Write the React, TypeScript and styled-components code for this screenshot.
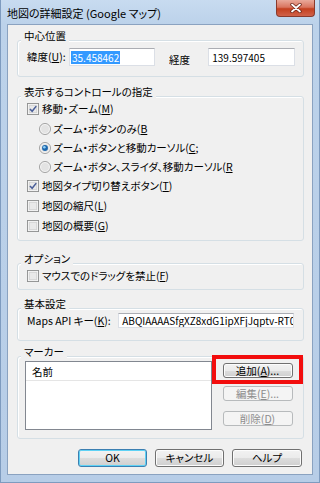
import React from 'react';
import styled, { createGlobalStyle } from 'styled-components';

const GlobalStyle = createGlobalStyle`
  html, body {
    margin: 0;
    padding: 0;
  }
  body {
    width: 320px;
    height: 483px;
    overflow: hidden;
    font-family: "Noto Sans CJK JP", "Liberation Sans", sans-serif;
    font-size: 10.5px;
    font-feature-settings: "palt";
    color: #000;
  }
`;

const Window = styled.div`
  width: 320px;
  height: 483px;
  box-sizing: border-box;
  display: flex;
  flex-direction: column;
  padding: 0 6px 7px;
  background: linear-gradient(180deg, #c8dbf0 0px, #bcd2ea 24px, #b7cde7 100%);
  border: 1px solid #7e9bbf;
  border-top: none;
`;

const TitleBar = styled.div`
  height: 24px;
  display: flex;
  align-items: flex-start;
  justify-content: space-between;
`;

const TitleText = styled.div`
  margin-top: 6px;
  line-height: 14px;
  font-size: 11px;
`;

const CloseButton = styled.div`
  width: 39px;
  height: 17px;
  margin-right: -2px;
  box-sizing: border-box;
  border: 1px solid #8a3a2c;
  border-top: none;
  border-radius: 0 0 4px 4px;
  background: linear-gradient(180deg, #e9a99a 0%, #d9755f 45%, #c4401f 55%, #d0624a 100%);
  display: flex;
  align-items: center;
  justify-content: center;
`;

const Client = styled.div`
  flex: 1;
  display: flex;
  flex-direction: column;
  background: #f0f0f0;
  border: 1px solid #8aa2c0;
  padding: 0 8px 0 9px;
`;

const Group = styled.section<{ top: number; bottom: number }>`
  margin-top: ${p => p.top}px;
  padding: 0 0 ${p => p.bottom}px 9px;
  border: 1px solid #d5dfe5;
  border-radius: 3px;
  box-shadow: inset 1px 1px 0 #fff;
`;

const GroupTitle = styled.div`
  width: fit-content;
  margin: -12px 0 0 -6px;
  padding: 0 3px;
  line-height: 14px;
  background: #f0f0f0;
`;

const Row = styled.div<{ h: number; top?: number; indent?: number }>`
  display: flex;
  align-items: center;
  height: ${p => p.h}px;
  margin-top: ${p => p.top ?? 0}px;
  margin-left: ${p => p.indent ?? 0}px;
  white-space: nowrap;
`;

const Label = styled.span<{ w?: number }>`
  flex: none;
  width: ${p => (p.w ? `${p.w}px` : 'auto')};
  line-height: 14px;
`;

const ClippedLabel = styled.div`
  flex: none;
  align-self: flex-start;
  width: 39px;
  margin-left: 14px;
  height: 29px;
  overflow: hidden;
  line-height: 24px;
  white-space: normal;
`;

const TextBox = styled.div<{ w: number }>`
  flex: none;
  width: ${p => p.w}px;
  height: 100%;
  box-sizing: border-box;
  display: flex;
  align-items: center;
  padding-left: 1px;
  background: #fff;
  border: 1px solid #dbdfe6;
  border-top-color: #abadb3;
  overflow: hidden;
  white-space: nowrap;
  font-size: 10px;
`;

const Selected = styled.span`
  background: #3399ff;
  color: #fff;
  line-height: 13px;
  padding: 0 1px;
`;

const BoxWrap = styled.span`
  display: inline-flex;
  margin-right: 3px;
`;

const RadioWrap = styled.span`
  display: inline-flex;
  margin-right: 2px;
`;

const MarkerRow = styled.div`
  display: flex;
  align-items: flex-start;
  margin-left: -2px;
`;

const ListBox = styled.div`
  width: 187px;
  height: 69px;
  margin-top: 2px;
  box-sizing: border-box;
  background: #fff;
  border: 1px solid #828790;
`;

const ListHeader = styled.div`
  height: 18px;
  display: flex;
  align-items: center;
  padding-left: 6px;
  border-bottom: 1px solid #e5e5e5;
`;

const ButtonColumn = styled.div`
  width: 91px;
  margin-top: -4px;
  display: flex;
  flex-direction: column;
  align-items: center;
`;

const Highlight = styled.div`
  width: 91px;
  box-sizing: border-box;
  border: 4px solid #f20d0d;
  padding: 4px 0 2px;
  display: flex;
  justify-content: center;
`;

const Button = styled.button<{ w: number; h: number; top?: number; variant?: 'default' | 'disabled' }>`
  width: ${p => p.w}px;
  height: ${p => p.h}px;
  margin: ${p => p.top ?? 0}px 0 0;
  padding: 0;
  box-sizing: border-box;
  font: inherit;
  font-feature-settings: "palt";
  line-height: 12px;
  border-radius: 3px;
  border: 1px solid ${p => (p.variant === 'disabled' ? '#b7babc' : p.variant === 'default' ? '#3c7fb1' : '#707070')};
  color: ${p => (p.variant === 'disabled' ? '#8d8d8d' : '#000')};
  background: ${p =>
    p.variant === 'disabled'
      ? '#f4f4f4'
      : 'linear-gradient(180deg, #f2f2f2 0%, #ebebeb 50%, #dddddd 50%, #cfcfcf 100%)'};
  box-shadow: inset 0 0 0 1px ${p => (p.variant === 'default' ? '#5fd2f5' : p.variant === 'disabled' ? '#f4f4f4' : '#fcfcfc')};
`;

const Footer = styled.div`
  display: flex;
  justify-content: flex-end;
  gap: 8px;
  margin: 10px 2px 0 0;
`;

const Check: React.FC<{ checked?: boolean }> = ({ checked }) => (
  <BoxWrap>
    <svg width="12" height="12" viewBox="0 0 13 13">
      <rect x="0.5" y="0.5" width="12" height="12" fill="#f7f7f7" stroke="#8e8f8f" />
      <rect x="2.5" y="2.5" width="8" height="8" fill="#e9e9e9" stroke="#d2d2d2" />
      {checked && <path d="M3.2 6.4 L5.6 9 L10 3.4" stroke="#4a5e98" strokeWidth="1.7" fill="none" />}
    </svg>
  </BoxWrap>
);

const Radio: React.FC<{ checked?: boolean }> = ({ checked }) => (
  <RadioWrap>
    <svg width="12" height="12" viewBox="0 0 13 13">
      <circle cx="6.5" cy="6.5" r="6" fill="#f4f4f4" stroke="#9c9c9c" />
      <circle cx="6.5" cy="6.5" r="4.2" fill="#e3e3e3" />
      {checked && (
        <>
          <circle cx="6.5" cy="6.5" r="3.2" fill="#1d67ad" />
          <circle cx="5.8" cy="5.6" r="1.4" fill="#8fd0f7" />
        </>
      )}
    </svg>
  </RadioWrap>
);

const App: React.FC = () => {
  return (
    <>
      <GlobalStyle />
      <Window>
        <TitleBar>
          <TitleText>地図の詳細設定 (Google マップ)</TitleText>
          <CloseButton>
            <svg width="12" height="10" viewBox="0 0 12 10">
              <path d="M2 1.5 L10 8.5 M10 1.5 L2 8.5" stroke="#6b2418" strokeWidth="3.4" strokeLinecap="round" />
              <path d="M2 1.5 L10 8.5 M10 1.5 L2 8.5" stroke="#fff" strokeWidth="1.8" strokeLinecap="round" />
            </svg>
          </CloseButton>
        </TitleBar>
        <Client>
          <Group top={15} bottom={10}>
            <GroupTitle>中心位置</GroupTitle>
            <Row h={18} top={5}>
              <Label w={42}>緯度(<u>U</u>):</Label>
              <TextBox w={86}>
                <Selected>35.458462</Selected>
              </TextBox>
              <ClippedLabel>経度 (<u>O</u>):</ClippedLabel>
              <TextBox w={87}>&nbsp;139.597405</TextBox>
            </Row>
          </Group>

          <Group top={19} bottom={4}>
            <GroupTitle>表示するコントロールの指定</GroupTitle>
            <Row h={20}>
              <Check checked />
              <Label>移動・ズーム(<u>M</u>)</Label>
            </Row>
            <Row h={19} indent={12}>
              <Radio />
              <Label>ズーム・ボタンのみ(<u>B</u></Label>
            </Row>
            <Row h={19} indent={12}>
              <Radio checked />
              <Label>ズーム・ボタンと移動カーソル(<u>C</u>;</Label>
            </Row>
            <Row h={19} indent={12}>
              <Radio />
              <Label>ズーム・ボタン、スライダ、移動カーソル(<u>R</u></Label>
            </Row>
            <Row h={20}>
              <Check checked />
              <Label>地図タイプ切り替えボタン(<u>T</u>)</Label>
            </Row>
            <Row h={20}>
              <Check />
              <Label>地図の縮尺(<u>L</u>)</Label>
            </Row>
            <Row h={20}>
              <Check />
              <Label>地図の概要(<u>G</u>)</Label>
            </Row>
          </Group>

          <Group top={22} bottom={4}>
            <GroupTitle>オプション</GroupTitle>
            <Row h={19}>
              <Check />
              <Label>マウスでのドラッグを禁止(<u>F</u>)</Label>
            </Row>
          </Group>

          <Group top={18} bottom={12}>
            <GroupTitle>基本設定</GroupTitle>
            <Row h={15} top={2}>
              <Label w={91}>Maps API キー(<u>K</u>):</Label>
              <TextBox w={176}>&nbsp;ABQIAAAASfgXZ8xdG1ipXFjJqptv-RT0</TextBox>
            </Row>
          </Group>

          <Group top={15} bottom={8}>
            <GroupTitle>マーカー</GroupTitle>
            <MarkerRow>
              <ListBox>
                <ListHeader>名前</ListHeader>
              </ListBox>
              <ButtonColumn>
                <Highlight>
                  <Button w={70} h={15}>追加(<u>A</u>)...</Button>
                </Highlight>
                <Button w={70} h={15} top={2} variant="disabled">編集(<u>E</u>)...</Button>
                <Button w={70} h={15} top={10} variant="disabled">削除(<u>D</u>)</Button>
              </ButtonColumn>
            </MarkerRow>
          </Group>

          <Footer>
            <Button w={69} h={18} variant="default">OK</Button>
            <Button w={69} h={18}>キャンセル</Button>
            <Button w={70} h={18}>ヘルプ</Button>
          </Footer>
        </Client>
      </Window>
    </>
  );
};

export default App;
